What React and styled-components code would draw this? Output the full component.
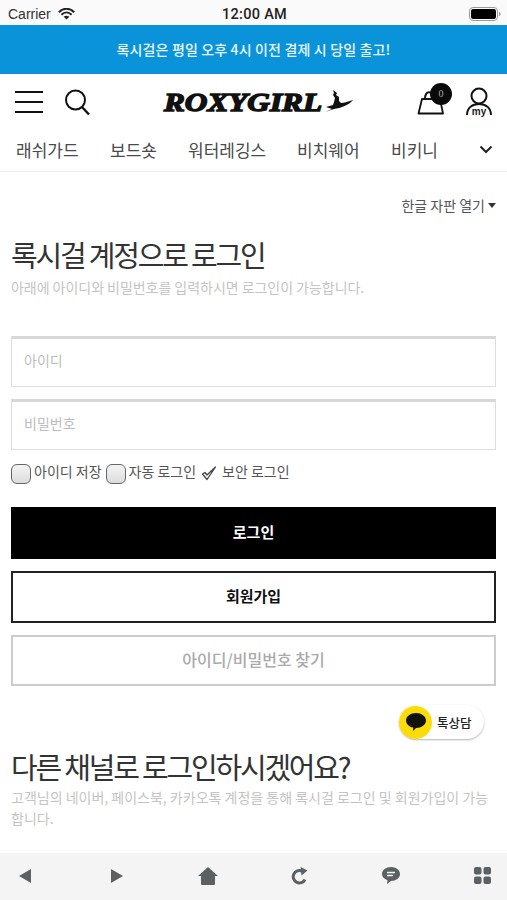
import React from 'react';
import styled, { createGlobalStyle } from 'styled-components';

const Global = createGlobalStyle`
  html, body { margin: 0; padding: 0; background: #fff; }
  body { font-family: "Noto Sans CJK KR", "Noto Sans", sans-serif; }
  * { box-sizing: border-box; }
`;
const Page = styled.div`
  position: relative; width: 507px; height: 900px; overflow: hidden;
  display: flex; flex-direction: column; background: #fff; color: #333;
`;
const StatusBar = styled.div`
  height: 25px; display: grid; grid-template-columns: 1fr auto 1fr; align-items: center;
  padding: 2px 6px 0 8px; background: #fafafa; color: #222;
  font: 14px/1 "Liberation Sans", sans-serif;
`;
const Carrier = styled.div`display: flex; align-items: center; gap: 7px; color: #333;`;
const Clock = styled.div`font-weight: 500; font-family: Roboto, sans-serif; font-size: 14.5px; letter-spacing: .3px; padding-top: 3px;`;
const Battery = styled.div`justify-self: end; display: flex;`;
const Banner = styled.div`
  height: 49px; background: #0b93d9; color: #e9f7ff; display: flex; align-items: center; justify-content: center;
  font-size: 14px; font-weight: 500; letter-spacing: .15px;
  padding-bottom: 1px;
`;
const Header = styled.header`
  height: 54px; display: flex; align-items: center; padding: 2px 15px 0 15px;
`;
const IconBtn = styled.div`display: flex; margin-right: ${p => p.$mr || 0}px;`;
const Logo = styled.div`
  flex: 1; display: flex; align-items: center; justify-content: center; margin-left: 9px;
`;
const LogoText = styled.span`
  display: block; width: 160px; overflow: visible;
  font: italic 700 25px/1 "Liberation Serif", serif; color: #111; letter-spacing: 0;
  -webkit-text-stroke: 1.4px #111;
  transform: scaleX(1.25); transform-origin: left center; white-space: nowrap;
`;
const Cart = styled.div`position: relative; display: flex; margin-right: 21px;`;
const Badge = styled.span`
  position: absolute; right: -7px; top: -5px; width: 22px; height: 22px; border-radius: 50%;
  background: #0a0a0a; color: #aaa; font: 10px/22px "Liberation Serif", serif; text-align: center;
`;
const Nav = styled.nav`
  height: 44px; display: flex; align-items: center; padding: 0 14px 0 16px;
  border-bottom: 1px solid #f0f0f0; font-size: 17px; color: #4a4a4a; letter-spacing: 0;
`;
const NavItem = styled.span`width: ${p => p.$w}px; white-space: nowrap; flex: none;`;
const Chevron = styled.div`margin-left: auto; display: flex;`;
const Main = styled.main`flex: 1; min-height: 0; overflow: hidden; padding: 0 11px;`;
const KeyboardToggle = styled.div`
  display: flex; justify-content: flex-end; align-items: center; gap: 3px; padding-top: 23px; height: 43px;
  font-size: 14px; color: #555; line-height: 20px;
`;
const Caret = styled.span`
  width: 0; height: 0; border-left: 4.5px solid transparent; border-right: 4.5px solid transparent;
  border-top: 5px solid #333;
`;
const Title = styled.h2`
  margin: ${p => p.$mt}px 0 0; font-size: 29px; line-height: 40px; font-weight: 400; color: #333;
  letter-spacing: -2.2px; white-space: nowrap;
`;
const Desc = styled.p`
  margin: ${p => p.$mt}px 0 0; font-size: 14px; line-height: 21px; color: #c4c4c4;
  letter-spacing: ${p => p.$ls}px;
`;
const Field = styled.div`
  height: 51px; margin-top: ${p => p.$mt}px; border: 1px solid #dedede; border-top: 3px solid #d8d8d8;
  display: flex; align-items: center; padding: 0 0 6px 12px; font-size: 14px; color: #bdbdbd;
`;
const Options = styled.div`
  display: flex; align-items: center; margin-top: 10px; height: 24px; font-size: 14px; color: #555;
`;
const Box = styled.span`
  width: 20px; height: 20px; border-radius: 6px; border: 1.5px solid #666; flex: none;
  background: linear-gradient(#f4f4f4, #dcdcdc); margin-right: 3px; margin-top: 3px;
`;
const OptLabel = styled.span`margin-right: ${p => p.$mr}px; padding-bottom: 2px; white-space: nowrap;`;
const Check = styled.span`display: flex; margin-right: 5px; margin-top: 2px;`;
const Action = styled.div`
  height: ${p => p.$h}px; margin-top: ${p => p.$mt}px; display: flex; align-items: center; justify-content: center;
  padding-bottom: 3px;
  background: ${p => p.$bg}; color: ${p => p.$c}; border: 2px solid ${p => p.$bc}; font-size: ${p => p.$fs}px; font-weight: ${p => p.$fw};
`;
const Kakao = styled.div`
  position: absolute; left: 399px; top: 705px; width: 85px; height: 34px; border-radius: 17px;
  background: #fff; box-shadow: 0 1px 2px rgba(0,0,0,.3);
  display: flex; align-items: center; font-size: 12.5px; font-weight: 500; color: #222;
`;
const KakaoDot = styled.span`
  width: 33px; height: 33px; border-radius: 50%; background: #fbdc08; display: flex; align-items: center; justify-content: center;
  margin-right: 5px; flex: none;
`;
const BottomBar = styled.footer`
  height: 47px; background: #f4f4f5; display: grid; grid-template-columns: repeat(6, 1fr); align-items: center;
`;
const BarIcon = styled.div`display: flex; transform: translateX(${p => p.$x}px); justify-content: center; margin-bottom: 2px;`;

const Fill = '#5b6063';
const icons = [
  <svg width="14" height="16" viewBox="0 0 14 16"><path d="M13 1v14L1 8z" fill={Fill}/></svg>,
  <svg width="14" height="16" viewBox="0 0 14 16"><path d="M1 1v14l12-7z" fill={Fill}/></svg>,
  <svg width="20" height="18" viewBox="0 0 20 18"><path d="M10 0l10 9h-3v8a1 1 0 0 1-1 1H4a1 1 0 0 1-1-1V9H0z" fill={Fill}/></svg>,
  <svg width="18" height="18" viewBox="0 0 18 18"><path d="M14 12.5A6.2 6.2 0 1 1 11 4.1" fill="none" stroke={Fill} strokeWidth="3"/><path d="M9.5 0l7 3.5-6 5z" fill={Fill}/></svg>,
  <svg width="18" height="17" viewBox="0 0 18 17"><path d="M9 0c5 0 9 3 9 7s-4 7-9 7l-4 3 .5-3.8C2 12 0 9.800 0 7c0-4 4-7 9-7z" fill={Fill}/><path d="M5 5.500h8M5 8.500h6" stroke="#f4f4f5" strokeWidth="1.400"/></svg>,
  <svg width="17" height="17" viewBox="0 0 17 17"><g fill={Fill}><rect width="7.500" height="7.500" rx="2"/><rect x="9.500" width="7.500" height="7.500" rx="2"/><rect y="9.500" width="7.500" height="7.500" rx="2"/><rect x="9.500" y="9.500" width="7.500" height="7.500" rx="2"/></g></svg>,
];
const shifts = [-17, -10, -3, 4, 11, 18];

export default function App() {
  return (
    <Page>
      <Global />
      <StatusBar>
        <Carrier>
          Carrier
          <svg width="17" height="12" viewBox="0 0 17 12"><path d="M.8 4.200C5.200-.4 11.800-.4 16.200 4.200M3.400 6.700c3-3 7.200-3 10.200 0" fill="none" stroke="#222" strokeWidth="2"/><path d="M8.500 11.500l-2.800-2.800c1.600-1.400 4-1.400 5.600 0z" fill="#222"/></svg>
        </Carrier>
        <Clock>12:00 AM</Clock>
        <Battery>
          <svg width="32" height="14" viewBox="0 0 32 14"><rect x=".5" y=".5" width="28" height="13" rx="3.500" fill="none" stroke="#999"/><rect x="2" y="2" width="25" height="10" rx="2.200" fill="#000"/><path d="M30 5v4c1 0 1.500-1 1.500-2s-.5-2-1.500-2z" fill="#999"/></svg>
        </Battery>
      </StatusBar>
      <Banner>록시걸은 평일 오후 4시 이전 결제 시 당일 출고!</Banner>
      <Header>
        <IconBtn $mr={22}>
          <svg width="28" height="24" viewBox="0 0 28 24"><path d="M0 2h28M0 12h28M0 22h28" stroke="#111" strokeWidth="2.200"/></svg>
        </IconBtn>
        <IconBtn>
          <svg width="26" height="27" viewBox="0 0 26 27"><circle cx="10.500" cy="11" r="9.500" fill="none" stroke="#111" strokeWidth="2"/><path d="M17 18l7 7.500" stroke="#111" strokeWidth="2.400"/></svg>
        </IconBtn>
        <Logo>
          <LogoText>ROXYGIRL</LogoText>
          <svg width="30" height="24" viewBox="0 0 30 24"><path d="M1 22l9-3c7-1 15-4 19-9-4 1-9 3-12 3l-2-2v-4l-3-2 1-2-4-3 1 3-1 2 2 3-1 4-1 3-7 2 6 2z" fill="#111"/></svg>
        </Logo>
        <Cart>
          <svg width="28" height="28" viewBox="0 0 28 28"><path d="M5 11h18l3 14.500H1.500zM8 11c0-9 8-9 8 0" fill="none" stroke="#111" strokeWidth="1.800" strokeLinejoin="round"/></svg>
          <Badge>0</Badge>
        </Cart>
        <svg width="26" height="30" viewBox="0 0 26 30"><circle cx="13" cy="9" r="7.500" fill="none" stroke="#111" strokeWidth="2"/><path d="M1 28c0-7 5-11 12-11s12 4 12 11" fill="none" stroke="#111" strokeWidth="2"/><text x="13" y="28" textAnchor="middle" fontSize="10" fontWeight="700" fontFamily="Liberation Sans" fill="#222">my</text></svg>
      </Header>
      <Nav>
        <NavItem $w={94}>래쉬가드</NavItem>
        <NavItem $w={78}>보드숏</NavItem>
        <NavItem $w={109}>워터레깅스</NavItem>
        <NavItem $w={94}>비치웨어</NavItem>
        <NavItem $w={60}>비키니</NavItem>
        <Chevron>
          <svg width="14" height="9" viewBox="0 0 14 9"><path d="M1.500 1.500L7 7l5.500-5.500" fill="none" stroke="#222" strokeWidth="2"/></svg>
        </Chevron>
      </Nav>
      <Main>
        <KeyboardToggle>한글 자판 열기<Caret /></KeyboardToggle>
        <Title $mt={19}>록시걸 계정으로 로그인</Title>
        <Desc $mt={3} $ls={-0.04}>아래에 아이디와 비밀번호를 입력하시면 로그인이 가능합니다.</Desc>
        <Field $mt={38}>아이디</Field>
        <Field $mt={12}>비밀번호</Field>
        <Options>
          <Box /><OptLabel $mr={4}>아이디 저장</OptLabel>
          <Box /><OptLabel $mr={5}>자동 로그인</OptLabel>
          <Check>
            <svg width="16" height="16" viewBox="0 0 16 16"><path d="M1.500 9l4.500 5.500L14.500 2 6 10 4 7.500z" fill="none" stroke="#444" strokeWidth="1.300" strokeLinejoin="round"/></svg>
          </Check>
          <OptLabel $mr={0}>보안 로그인</OptLabel>
        </Options>
        <Action $h={52} $mt={23} $bg="#000" $c="#fff" $bc="#000" $fs={15} $fw={700}>로그인</Action>
        <Action $h={52} $mt={12} $bg="#fff" $c="#111" $bc="#222" $fs={15} $fw={700}>회원가입</Action>
        <Action $h={51} $mt={12} $bg="#fff" $c="#aaa" $bc="#ccc" $fs={16} $fw={500}>아이디/비밀번호 찾기</Action>
        <Title $mt={60}>다른 채널로 로그인하시겠어요?</Title>
        <Desc $mt={1} $ls={0}>고객님의 네이버, 페이스북, 카카오톡 계정을 통해 록시걸 로그인 및 회원가입이 가능합니다.</Desc>
      </Main>
      <Kakao>
        <KakaoDot>
          <svg width="20" height="18" viewBox="0 0 20 18"><path d="M10 0c5.500 0 10 3.200 10 7.500S15.500 15 10 15l-3 3 .2-3.400C3 13.800 0 11 0 7.500 0 3.200 4.500 0 10 0z" fill="#111"/></svg>
        </KakaoDot>
        톡상담
      </Kakao>
      <BottomBar>
        {icons.map((icon, i) => <BarIcon key={i} $x={shifts[i]}>{icon}</BarIcon>)}
      </BottomBar>
    </Page>
  );
}
